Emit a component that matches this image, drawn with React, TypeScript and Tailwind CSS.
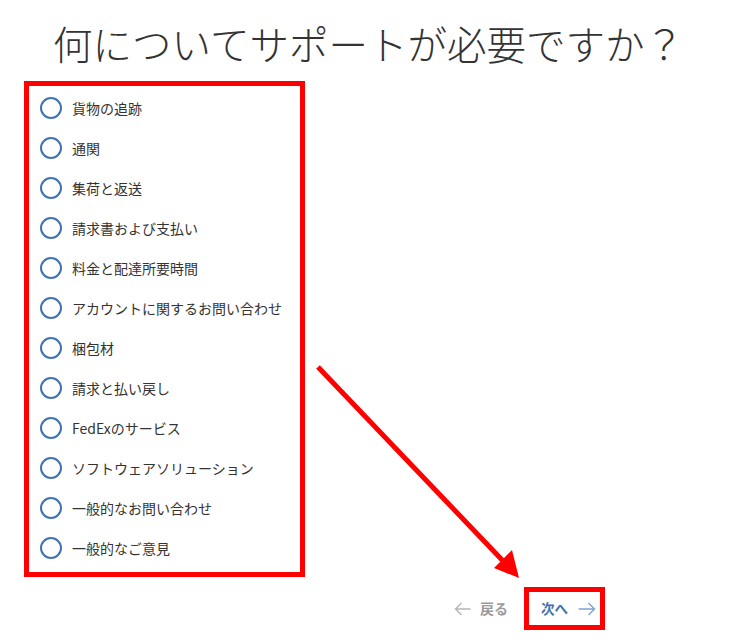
import React from "react";

const items = [
  "貨物の追跡",
  "通関",
  "集荷と返送",
  "請求書および支払い",
  "料金と配達所要時間",
  "アカウントに関するお問い合わせ",
  "梱包材",
  "請求と払い戻し",
  "FedExのサービス",
  "ソフトウェアソリューション",
  "一般的なお問い合わせ",
  "一般的なご意見",
];

export default function App() {
  return (
    <div
      className="relative w-[737px] h-[642px] bg-white overflow-hidden text-[#333333]"
      style={{ fontFamily: '"Noto Sans CJK JP", "Noto Sans", sans-serif' }}
    >
      <h1 className="pt-[17px] text-center text-[39.5px] leading-[51px] font-light">
        何についてサポートが必要ですか？
      </h1>

      <div className="ml-[24px] mt-[13px] w-[281px] border-[5px] border-[#ff0000] pl-[11px] pt-[2px] pb-[4px]">
        {items.map((t) => (
          <label key={t} className="flex h-[40px] items-center gap-[10px]">
            <span className="block h-[22px] w-[22px] rounded-full border-2 border-[#3e72b0] bg-white" />
            <span className="text-[14px] leading-none text-[#333333]">{t}</span>
          </label>
        ))}
      </div>

      <div className="mt-[10px] flex items-center justify-end pr-[132px]">
        <button className="flex items-center gap-[9px] text-[14px] font-bold text-[#9a9a9a]">
          <svg width="17" height="14" viewBox="0 0 17 14" fill="none" stroke="#b5b5b5" strokeWidth="1.4">
            <path d="M16.5 7H1.5M7.5 1L1.5 7L7.5 13" />
          </svg>
          <span>戻る</span>
        </button>
        <div className="ml-[16px] flex h-[43px] w-[81px] items-center border-[5px] border-[#ff0000] pl-[12px]">
          <button className="flex items-center gap-[10px] text-[13.5px] font-bold text-[#4470ad]">
            <span>次へ</span>
            <svg width="18" height="14" viewBox="0 0 18 14" fill="none" stroke="#7ea3d1" strokeWidth="1.4">
              <path d="M0.5 7H16.5M10.5 1L16.5 7L10.5 13" />
            </svg>
          </button>
        </div>
      </div>

      <svg
        className="pointer-events-none absolute left-0 top-0"
        width="737"
        height="642"
        viewBox="0 0 737 642"
      >
        <line x1="318" y1="367" x2="505" y2="563" stroke="#ff0000" strokeWidth="5" />
        <polygon points="519,578 494,568 512,550" fill="#ff0000" />
      </svg>
    </div>
  );
}
